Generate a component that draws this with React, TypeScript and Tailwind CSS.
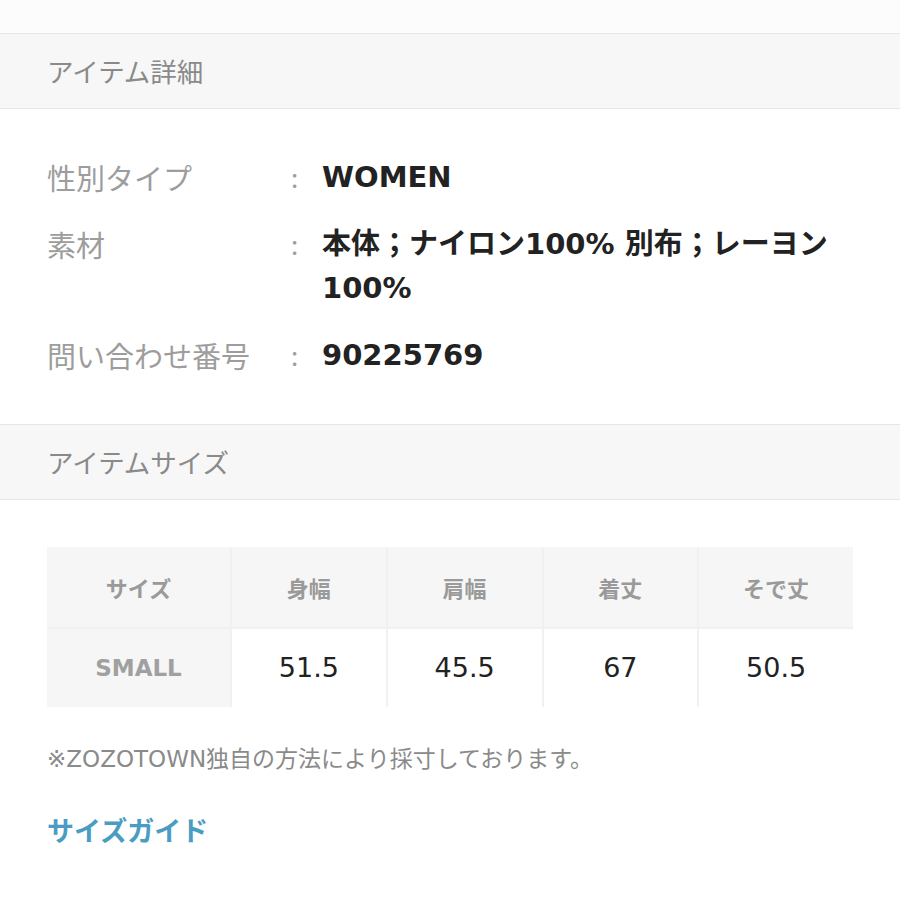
import React from "react";

function SectionHeader({ title }: { title: string }) {
  return (
    <div className="h-[76px] bg-[#f7f7f7] border-y border-[#e6e6e6] flex items-center pl-[47px]">
      <span className="text-[26.5px] text-[#8a8a8a] font-['Noto_Sans_CJK_JP',sans-serif]">{title}</span>
    </div>
  );
}

function Row({ label, children }: { label: string; children: React.ReactNode }) {
  return (
    <div className="flex">
      <div className="w-[244px] text-[29px] text-[#9d9d9d] leading-[44px] font-['Noto_Sans_CJK_JP',sans-serif]">{label}</div>
      <div className="w-[31px] text-[26px] text-[#9d9d9d] leading-[44px] font-['Noto_Sans_CJK_JP',sans-serif]">:</div>
      <div className="flex-1 pr-[40px] text-[29px] font-bold text-[#222] leading-[44px] font-['DejaVu_Sans','Noto_Sans_CJK_JP',sans-serif]">{children}</div>
    </div>
  );
}

export default function App() {
  const heads = ["サイズ", "身幅", "肩幅", "着丈", "そで丈"];
  const vals = ["51.5", "45.5", "67", "50.5"];
  return (
    <div className="w-[900px] h-[900px] bg-white overflow-hidden">
      <div className="h-[33px] bg-[#fcfcfc]" />
      <SectionHeader title="アイテム詳細" />
      <div className="pl-[47px] pt-[46px] pb-[47px] flex flex-col gap-[23px]">
        <Row label="性別タイプ">WOMEN</Row>
        <Row label="素材">本体；ナイロン100% 別布；レーヨン100%</Row>
        <Row label="問い合わせ番号">90225769</Row>
      </div>
      <SectionHeader title="アイテムサイズ" />
      <div className="px-[47px] pt-[47px]">
        <div className="grid grid-cols-[183px_1fr_1fr_1fr_1fr] gap-[2px] bg-[#f1f1f1]">
          {heads.map((h) => (
            <div key={h} className="h-[80px] bg-[#f6f6f6] flex items-center justify-center text-[22px] font-bold text-[#9a9a9a] font-['Noto_Sans_CJK_JP',sans-serif]">{h}</div>
          ))}
          <div className="h-[78px] bg-[#f6f6f6] flex items-center justify-center text-[23px] font-bold text-[#a0a0a0] font-['DejaVu_Sans',sans-serif]">SMALL</div>
          {vals.map((v, i) => (
            <div key={i} className="h-[78px] bg-white flex items-center justify-center text-[27px] text-[#222] font-['DejaVu_Sans',sans-serif]">{v}</div>
          ))}
        </div>
        <div className="mt-[35px] text-[23px] text-[#8a8a8a] font-['DejaVu_Sans','Noto_Sans_CJK_JP',sans-serif]">※ZOZOTOWN独自の方法により採寸しております。</div>
        <div className="mt-[33px] text-[27px] font-bold text-[#4a9cc3] font-['Noto_Sans_CJK_JP',sans-serif]">サイズガイド</div>
      </div>
    </div>
  );
}
